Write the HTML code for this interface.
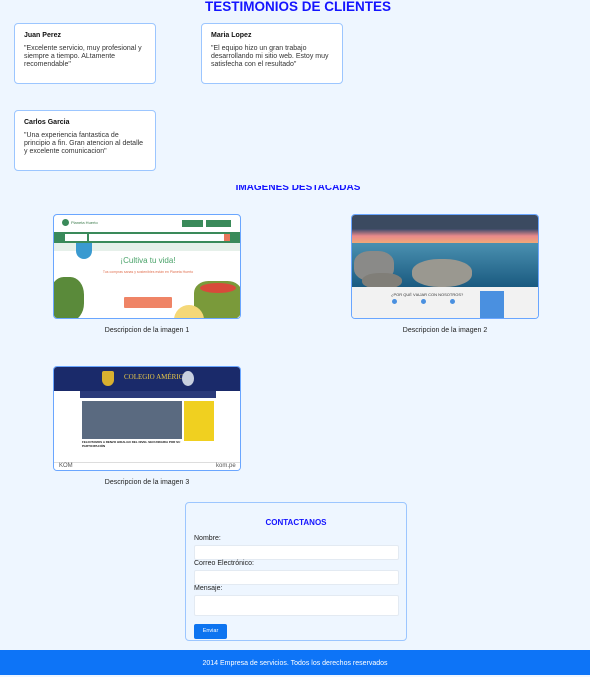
<!DOCTYPE html>
<html><head><meta charset="utf-8"><style>
*{box-sizing:border-box;margin:0;padding:0}
body{width:590px;height:675px;background:#eef6ff;font-family:"Liberation Sans",Arial,sans-serif;position:relative;overflow:hidden;color:#222}
.a{position:absolute}
h1{position:absolute;left:0;width:596px;text-align:center;top:-1px;font-size:13.5px;color:#1414ff;font-weight:bold}
.card{position:absolute;width:142px;height:61px;background:#fff;border:1px solid #9cc6ff;border-radius:4px;padding:8px 9px}
.card b{display:block;font-size:7px;margin-top:0px;color:#111}
.card p{font-size:7px;line-height:8px;margin-top:6px;color:#333}
.img{position:absolute;width:188px;height:105px;border:1px solid #6aa6ff;border-radius:4px;overflow:hidden;background:#fff}
.cap{position:absolute;width:188px;text-align:center;font-size:7px;color:#222}
.form{position:absolute;left:185px;top:502px;width:222px;height:139px;border:1px solid #9cc6ff;border-radius:4px;background:#eef6ff}
.lbl{position:absolute;left:8px;font-size:7px;color:#222}
.inp{position:absolute;left:8px;width:205px;height:15px;background:#fff;border:1px solid #e3eaf2;border-radius:2px}
</style></head><body>
<h1>TESTIMONIOS DE CLIENTES</h1>
<div class="card" style="left:14px;top:23px"><b>Juan Perez</b><p>"Excelente servicio, muy profesional y siempre a tiempo. ALtamente recomendable"</p></div>
<div class="card" style="left:201px;top:23px"><b>Maria Lopez</b><p>"El equipo hizo un gran trabajo desarrollando mi sitio web. Estoy muy satisfecha con el resultado"</p></div>
<div class="card" style="left:14px;top:110px"><b>Carlos Garcia</b><p>"Una experiencia fantastica de principio a fin. Gran atencion al detalle y excelente comunicacion"</p></div>
<div class="a" style="left:0;top:185px;width:596px;height:9px;overflow:hidden"><div style="text-align:center;font-size:10px;font-weight:bold;color:#1414ff;margin-top:-3px">IMAGENES DESTACADAS</div></div>

<div class="img" style="left:53px;top:214px">
 <div class="a" style="left:8px;top:4px;width:7px;height:7px;border-radius:50%;background:#3a8a5a"></div>
 <div class="a" style="left:17px;top:5px;font-size:4px;color:#3a7a4a">Planeta Huerto</div>
 <div class="a" style="left:128px;top:5px;width:21px;height:7px;background:#3a8a5a"></div>
 <div class="a" style="left:152px;top:5px;width:25px;height:7px;background:#3a8a5a"></div>
 <div class="a" style="left:0;top:17px;width:188px;height:11px;background:#3a8a5a"></div>
 <div class="a" style="left:11px;top:19px;width:22px;height:7px;background:#fff"></div>
 <div class="a" style="left:35px;top:19px;width:140px;height:7px;background:#fff"></div>
 <div class="a" style="left:170px;top:19px;width:6px;height:7px;background:#e8775a"></div>
 <div class="a" style="left:0;top:28px;width:188px;height:8px;background:#e6f0ea"></div>
 <div class="a" style="left:0;width:188px;text-align:center;top:41px;font-size:8px;color:#4aa36a">¡Cultiva tu vida!</div>
 <div class="a" style="left:0;width:188px;text-align:center;top:55px;font-size:3.5px;color:#e07050">Tus compras sanas y sostenibles están en Planeta Huerto</div>
 <div class="a" style="left:70px;top:82px;width:48px;height:11px;background:#ef8466;border-radius:1px"></div>
 <div class="a" style="left:-4px;top:62px;width:34px;height:44px;background:#5a8a3a;border-radius:40%"></div>
 <div class="a" style="left:140px;top:66px;width:48px;height:40px;background:#7a9a3a;border-radius:30%"></div>
 <div class="a" style="left:146px;top:68px;width:36px;height:10px;background:#d84a3a;border-radius:50%"></div>
 <div class="a" style="left:22px;top:28px;width:16px;height:16px;border-radius:0 0 16px 16px;background:#3a9ad0"></div>
 <div class="a" style="left:120px;top:90px;width:30px;height:30px;background:#f5d878;border-radius:50%"></div>
</div>
<div class="cap" style="left:53px;top:327px">Descripcion de la imagen 1</div>

<div class="img" style="left:351px;top:214px">
 <div class="a" style="left:0;top:0;width:188px;height:14px;background:#3b4a60"></div>
 <div class="a" style="left:0;top:14px;width:188px;height:14px;background:linear-gradient(#3a4a6a,#e98a8a,#f0a878)"></div>
 <div class="a" style="left:0;top:28px;width:188px;height:44px;background:linear-gradient(#4a90b0,#1a5a80)"></div>
 <div class="a" style="left:2px;top:36px;width:40px;height:30px;background:#8a8a88;border-radius:40%"></div>
 <div class="a" style="left:60px;top:44px;width:60px;height:28px;background:#9a9890;border-radius:45%"></div>
 <div class="a" style="left:10px;top:58px;width:40px;height:16px;background:#807e78;border-radius:45%"></div>
 <div class="a" style="left:0;top:72px;width:188px;height:33px;background:#f2f2f2"></div>
 <div class="a" style="left:39px;top:77px;font-size:4px;color:#333">¿POR QUÉ VIAJAR CON NOSOTROS?</div>
 <div class="a" style="left:40px;top:84px;width:5px;height:5px;border-radius:50%;background:#4a90e0"></div>
 <div class="a" style="left:69px;top:84px;width:5px;height:5px;border-radius:50%;background:#4a90e0"></div>
 <div class="a" style="left:98px;top:84px;width:5px;height:5px;border-radius:50%;background:#4a90e0"></div>
 <div class="a" style="left:128px;top:76px;width:24px;height:29px;background:#4a90e0"></div>
</div>
<div class="cap" style="left:351px;top:327px">Descripcion de la imagen 2</div>

<div class="img" style="left:53px;top:366px">
 <div class="a" style="left:0;top:0;width:188px;height:24px;background:#1a2a6a"></div>
 <div class="a" style="left:48px;top:4px;width:12px;height:15px;background:#d8b030;border-radius:2px 2px 6px 6px"></div>
 <div class="a" style="left:70px;top:6px;font-size:7px;color:#e8c848;font-family:'Liberation Serif',serif">COLEGIO AMÉRICA</div>
 <div class="a" style="left:128px;top:4px;width:12px;height:15px;background:#c8d0e0;border-radius:50%"></div>
 <div class="a" style="left:26px;top:24px;width:136px;height:7px;background:#2a3a7a"></div>
 <div class="a" style="left:26px;top:31px;width:136px;height:64px;background:#fff"></div>
 <div class="a" style="left:28px;top:34px;width:100px;height:38px;background:#5a6a80"></div>
 <div class="a" style="left:130px;top:34px;width:30px;height:40px;background:#f0d020"></div>
 <div class="a" style="left:28px;top:73px;width:100px;font-size:3px;font-weight:bold;color:#111">FELICITAMOS A RENZO HIDALGO DEL NIVEL SECUNDARIA POR SU PARTICIPACIÓN</div>
 <div class="a" style="left:0;top:95px;width:188px;height:10px;background:#fff;border-top:1px solid #ddd"></div>
 <div class="a" style="left:5px;top:96px;font-size:6px;color:#555">KOM</div>
 <div class="a" style="left:162px;top:96px;font-size:6px;color:#555">kom.pe</div>
</div>
<div class="cap" style="left:53px;top:479px">Descripcion de la imagen 3</div>

<div class="form">
 <div class="a" style="left:0;width:220px;text-align:center;top:15px;font-size:8px;font-weight:bold;color:#1414ff">CONTACTANOS</div>
 <div class="lbl" style="top:32px">Nombre:</div>
 <div class="inp" style="top:42px"></div>
 <div class="lbl" style="top:57px">Correo Electrónico:</div>
 <div class="inp" style="top:67px"></div>
 <div class="lbl" style="top:82px">Mensaje:</div>
 <div class="inp" style="top:92px;height:21px"></div>
 <div class="a" style="left:8px;top:121px;width:33px;height:15px;background:#0d74f0;border-radius:2px;color:#fff;font-size:5.5px;text-align:center;line-height:15px">Enviar</div>
</div>
<div class="a" style="left:0;top:650px;width:590px;height:25px;background:#0d74f7;color:#fff;font-size:7px;text-align:center;line-height:27px">2014 Empresa de servicios. Todos los derechos reservados</div>
</body></html>
